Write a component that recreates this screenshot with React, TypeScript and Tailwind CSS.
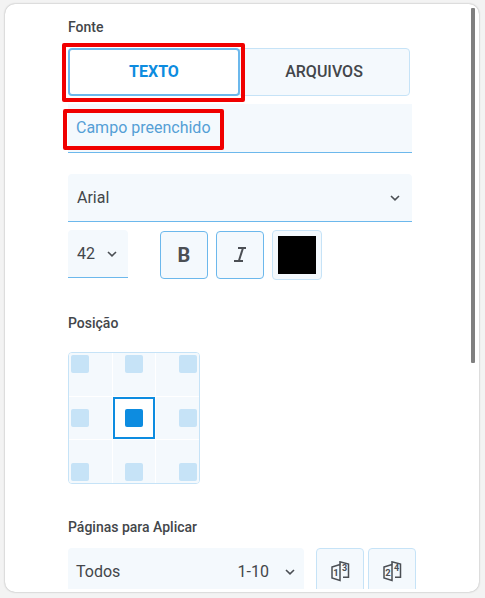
import React from "react";

const font = { fontFamily: "Roboto, sans-serif" };

function Chevron({ className = "" }: { className?: string }) {
  return (
    <svg width="10" height="6" viewBox="0 0 10 6" fill="none" className={className}>
      <path d="M1 1l4 3.8L9 1" stroke="#4b4f54" strokeWidth="1.6" />
    </svg>
  );
}

function PagesIcon({ a, b }: { a: string; b: string }) {
  return (
    <svg width="22" height="22" viewBox="0 0 22 22" fill="none">
      <path d="M11 3.5V0.8l8.5 2.2v13.2H14" stroke="#4b4f54" strokeWidth="1.5" />
      <path d="M3 6l8-2.5v16L3 17z" fill="#f4f9fd" stroke="#4b4f54" strokeWidth="1.5" />
      <text x="7.1" y="15.4" fontSize="9.5" fontWeight="700" textAnchor="middle" fill="#4b4f54" fontFamily="Roboto, sans-serif">{a}</text>
      <text x="15.5" y="10" fontSize="9" fontWeight="700" textAnchor="middle" fill="#4b4f54" fontFamily="Roboto, sans-serif">{b}</text>
    </svg>
  );
}

function Cell({ active, align }: { active?: boolean; align: string }) {
  return (
    <div className={`flex ${align} ${active ? "justify-center items-center bg-white border-2 border-[#0d8ce0]" : "bg-[#f4f9fd] p-[2px]"}`}>
      <div className={`w-[18px] h-[18px] rounded-[2px] ${active ? "bg-[#0d8ce0]" : "bg-[#c6e3f7]"}`} />
    </div>
  );
}

export default function App() {
  return (
    <div style={font} className="w-[485px] h-[598px] bg-[#f3f3f3] pt-[4px] pl-[5px] pr-[6px] pb-[6px] overflow-hidden text-[#43464a]">
      <div className="relative h-[588px] bg-white rounded-[10px] shadow-[0_0_2px_rgba(0,0,0,0.35)] overflow-hidden">
        <div className="absolute left-[466px] top-[4px] w-[4px] h-[355px] bg-[#808080] rounded-[1px]" />
        <div className="h-[585px] overflow-hidden pl-[63px] pt-[15px]">
          <div className="text-[14px] font-medium leading-[16px]">Fonte</div>

          <div className="relative mt-[13px] flex w-[342px] h-[48px]">
            <div className="w-[172px] h-[48px] flex items-center justify-center bg-white border-2 border-[#6cb8ec] rounded-[4px] text-[#0d8ce0] text-[16px] font-bold z-10">TEXTO</div>
            <div className="-ml-[2px] flex-1 h-[48px] flex items-center justify-center bg-[#f4f9fd] border border-[#c6e3f7] rounded-[4px] text-[16px] font-medium">ARQUIVOS</div>
            <div className="absolute -left-[6px] -top-[5px] w-[183px] h-[59px] border-[4px] border-[#f00000] rounded-[2px] z-20" />
          </div>

          <div className="relative mt-[8px] w-[344px] h-[49px] bg-[#f4f9fd] border-b border-[#6cb8ec] flex items-center pl-[8px] text-[16px] text-[#559fd6]">
            Campo preenchido
            <div className="absolute -left-[5px] top-[5px] w-[161px] h-[41px] border-[4px] border-[#f00000] rounded-[2px]" />
          </div>

          <div className="mt-[21px] w-[344px] h-[48px] bg-[#f4f9fd] border-b border-[#6cb8ec] rounded-t-[4px] flex items-center justify-between pl-[9px] pr-[12px] text-[16px]">
            Arial
            <Chevron />
          </div>

          <div className="mt-[8px] flex items-start">
            <div className="w-[60px] h-[48px] bg-[#f4f9fd] border-b border-[#6cb8ec] rounded-t-[4px] flex items-center pl-[9px] text-[16px]">
              42
              <Chevron className="ml-[12px]" />
            </div>
            <div className="ml-[32px] mt-px w-[48px] h-[48px] bg-[#f4f9fd] border border-[#6cb8ec] rounded-[4px] flex items-center justify-center text-[20px] font-bold text-[#4b4f54]">B</div>
            <div className="ml-[8px] mt-px w-[48px] h-[48px] bg-[#f4f9fd] border border-[#6cb8ec] rounded-[4px] flex items-center justify-center">
              <svg width="14" height="16" viewBox="0 0 14 16" fill="none">
                <path d="M5 1h8" stroke="#4b4f54" strokeWidth="1.8" />
                <path d="M9.8 1.5L6 13.5" stroke="#4b4f54" strokeWidth="2" />
                <path d="M1 14h9" stroke="#4b4f54" strokeWidth="2" />
              </svg>
            </div>
            <div className="ml-[8px] w-[50px] h-[50px] bg-[#f4f9fd] border border-[#c6e3f7] rounded-[4px] flex items-center justify-center">
              <div className="w-[38px] h-[38px] bg-black" />
            </div>
          </div>

          <div className="mt-[35px] text-[14px] font-medium leading-[16px]">Posição</div>

          <div className="mt-[21px] w-[132px] h-[132px] grid grid-cols-3 grid-rows-3 gap-px bg-white border border-[#c6e3f7] rounded-[4px] overflow-hidden">
            <Cell align="justify-start items-start" />
            <Cell align="justify-center items-start" />
            <Cell align="justify-end items-start" />
            <Cell align="justify-start items-center" />
            <Cell active align="" />
            <Cell align="justify-end items-center" />
            <Cell align="justify-start items-end" />
            <Cell align="justify-center items-end" />
            <Cell align="justify-end items-end" />
          </div>

          <div className="mt-[35px] text-[14px] font-medium leading-[16px]">Páginas para Aplicar</div>

          <div className="mt-[13px] flex items-start">
            <div className="w-[236px] h-[48px] bg-[#f4f9fd] rounded-t-[4px] flex items-center pl-[8px] pr-[9px] text-[16px]">
              <span>Todos</span>
              <span className="ml-auto">1-10</span>
              <Chevron className="ml-[16px]" />
            </div>
            <div className="ml-[12px] w-[48px] h-[48px] bg-[#f4f9fd] border border-[#c6e3f7] rounded-[4px] flex items-center justify-center">
              <PagesIcon a="1" b="3" />
            </div>
            <div className="ml-[4px] w-[48px] h-[48px] bg-[#f4f9fd] border border-[#c6e3f7] rounded-[4px] flex items-center justify-center">
              <PagesIcon a="2" b="4" />
            </div>
          </div>
        </div>
      </div>
    </div>
  );
}
